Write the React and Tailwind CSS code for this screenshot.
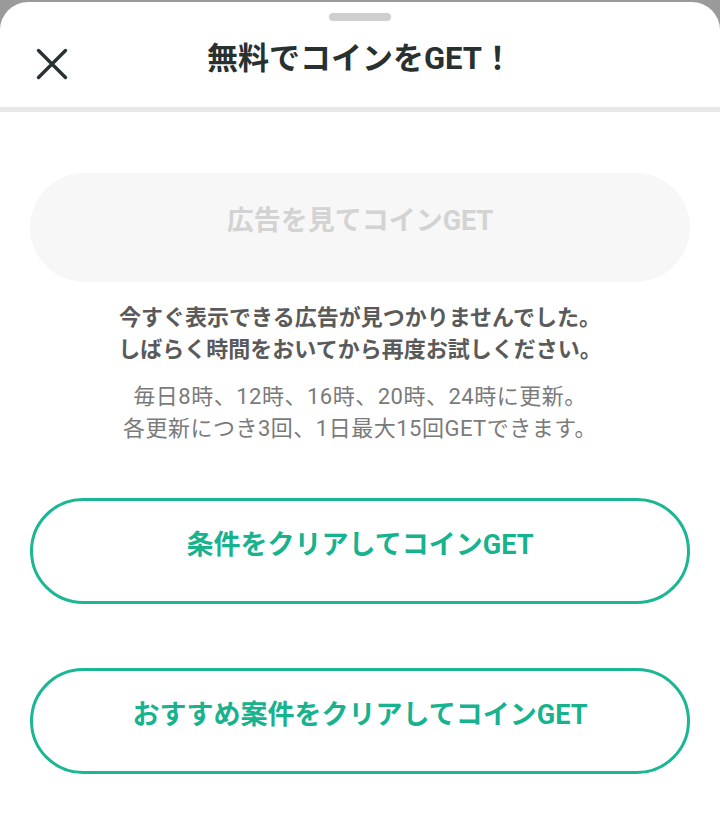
import React from "react";

export default function App() {
  return (
    <div className="w-[720px] h-[820px] bg-[#9a9a9a] pt-[2px] overflow-hidden font-['Roboto','Noto_Sans_CJK_JP',sans-serif]">
      <div className="h-full bg-white rounded-t-[28px] flex flex-col">
        <div className="mt-[11px] mx-auto w-[62px] h-[8px] rounded-full bg-[#cfcfcf]" />
        <div className="h-[86px] grid grid-cols-[1fr_auto_1fr] items-center">
          <div className="pl-[36px] flex items-center">
            <svg width="32" height="32" viewBox="0 0 32 32" fill="none">
              <path
                d="M2.5 2.5 L29.5 29.5 M29.5 2.5 L2.5 29.5"
                stroke="#283232"
                strokeWidth="3.4"
                strokeLinecap="round"
              />
            </svg>
          </div>
          <div className="mb-[11px] text-[31px] leading-[38px] font-bold text-[#283030]">
            無料でコインをGET！
          </div>
          <div />
        </div>
        <div className="h-[5px] bg-[#e8e8e8]" />

        <div className="px-[30px] flex flex-col">
          <div className="mt-[61px] h-[109px] rounded-full bg-[#f7f7f7] flex items-center justify-center pb-[12px]">
            <span className="text-[27px] font-bold text-[#d3d3d3]">広告を見てコインGET</span>
          </div>

          <div className="mt-[20px] text-center text-[22px] leading-[32px] font-bold text-[#5a5a5a]">
            <p>今すぐ表示できる広告が見つかりませんでした。</p>
            <p>しばらく時間をおいてから再度お試しください。</p>
          </div>
          <div className="mt-[15px] text-center text-[22px] leading-[32px] tracking-[0.5px] text-[#7a7a7a]">
            <p>毎日8時、12時、16時、20時、24時に更新。</p>
            <p>各更新につき3回、1日最大15回GETできます。</p>
          </div>

          <button className="mt-[53px] h-[106px] rounded-full border-[3px] border-[#1bb794] flex items-center justify-center pb-[11px]">
            <span className="text-[27px] font-bold text-[#17b28e]">条件をクリアしてコインGET</span>
          </button>
          <button className="mt-[64px] h-[106px] rounded-full border-[3px] border-[#1bb794] flex items-center justify-center pb-[11px]">
            <span className="text-[27px] font-bold text-[#17b28e]">おすすめ案件をクリアしてコインGET</span>
          </button>
        </div>
      </div>
    </div>
  );
}
